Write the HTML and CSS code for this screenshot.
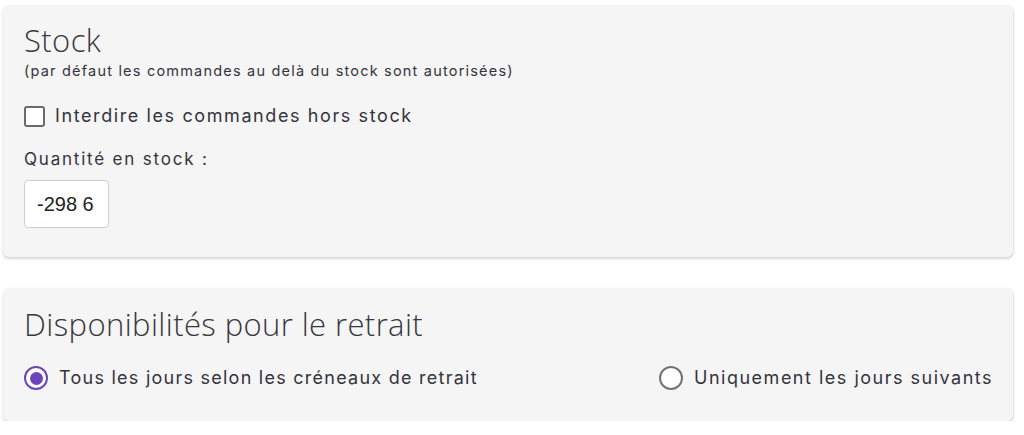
FILE: index.html
```html
<!DOCTYPE html>
<html lang="fr">
<head>
<meta charset="utf-8">
<link rel="stylesheet" href="styles.css">
</head>
<body>
<div class="page">
  <section class="card card-stock">
    <h2 class="title">Stock</h2>
    <p class="subtitle">(par défaut les commandes au delà du stock sont autorisées)</p>
    <label class="check-row">
      <span class="checkbox"></span>
      <span class="label-text check-text">Interdire les commandes hors stock</span>
    </label>
    <div class="field-label">Quantité en stock :</div>
    <input class="qty" type="text" value="-298 6">
  </section>
  <section class="card card-retrait">
    <h2 class="title">Disponibilités pour le retrait</h2>
    <div class="radio-row">
      <label class="radio-opt">
        <span class="radio checked"></span>
        <span class="label-text radio-text-a">Tous les jours selon les créneaux de retrait</span>
      </label>
      <label class="radio-opt">
        <span class="radio"></span>
        <span class="label-text radio-text-b">Uniquement les jours suivants</span>
      </label>
    </div>
  </section>
</div>
</body>
</html>
```

FILE: styles.css
```css
html, body {
  margin: 0;
  padding: 0;
  background: #ffffff;
}
body {
  font-family: "Inter", "Open Sans", sans-serif;
  color: #34343c;
}
.page {
  padding: 5px 11px 0 3px;
  display: flex;
  flex-direction: column;
  gap: 31px;
}
.card {
  background: #f5f5f5;
  border-radius: 6px;
  box-shadow: 0 2px 3px rgba(0, 0, 0, 0.16), 1px 0 2px rgba(0, 0, 0, 0.06);
  padding: 19px 20px 29px 21px;
}
.title {
  margin: 0;
  font-family: "Open Sans", sans-serif;
  font-size: 31px;
  line-height: 32px;
  font-weight: 300;
  letter-spacing: 0.4px;
  color: #38383e;
}
.subtitle {
  margin: 6px 0 0;
  font-size: 14.5px;
  line-height: 18px;
  letter-spacing: 1.2px;
}
.check-row {
  display: flex;
  align-items: center;
  gap: 10px;
  margin-top: 24px;
  height: 24px;
}
.checkbox {
  width: 17px;
  height: 17px;
  border: 2px solid #6b6b6b;
  border-radius: 3px;
  background: #fff;
}
.label-text {
  font-size: 18px;
  line-height: 24px;
}
.check-text {
  letter-spacing: 1.6px;
}
.field-label {
  margin-top: 19px;
  font-size: 17px;
  line-height: 24px;
  letter-spacing: 1.8px;
}
.qty {
  display: block;
  margin-top: 9px;
  width: 85px;
  height: 48px;
  box-sizing: border-box;
  border: 1px solid #cfcfcf;
  border-radius: 4px;
  background: #fff;
  padding: 0 10px 0 12px;
  font-family: "Liberation Sans", sans-serif;
  font-size: 20px;
  color: #222;
}
.card-retrait {
  padding-top: 20px;
  padding-bottom: 31px;
}
.radio-row {
  margin-top: 26px;
  display: flex;
  justify-content: space-between;
  align-items: center;
}
.radio-opt {
  display: flex;
  align-items: center;
  gap: 11px;
}
.radio-text-a {
  letter-spacing: 1.25px;
}
.radio-text-b {
  letter-spacing: 1.5px;
}
.radio {
  width: 20px;
  height: 20px;
  border: 2px solid #737373;
  border-radius: 50%;
  background: #fff;
  position: relative;
}
.radio.checked {
  border-color: #6a45bb;
}
.radio.checked::after {
  content: "";
  position: absolute;
  left: 3.5px;
  top: 3.5px;
  width: 13px;
  height: 13px;
  border-radius: 50%;
  background: #6a45bb;
}
```
